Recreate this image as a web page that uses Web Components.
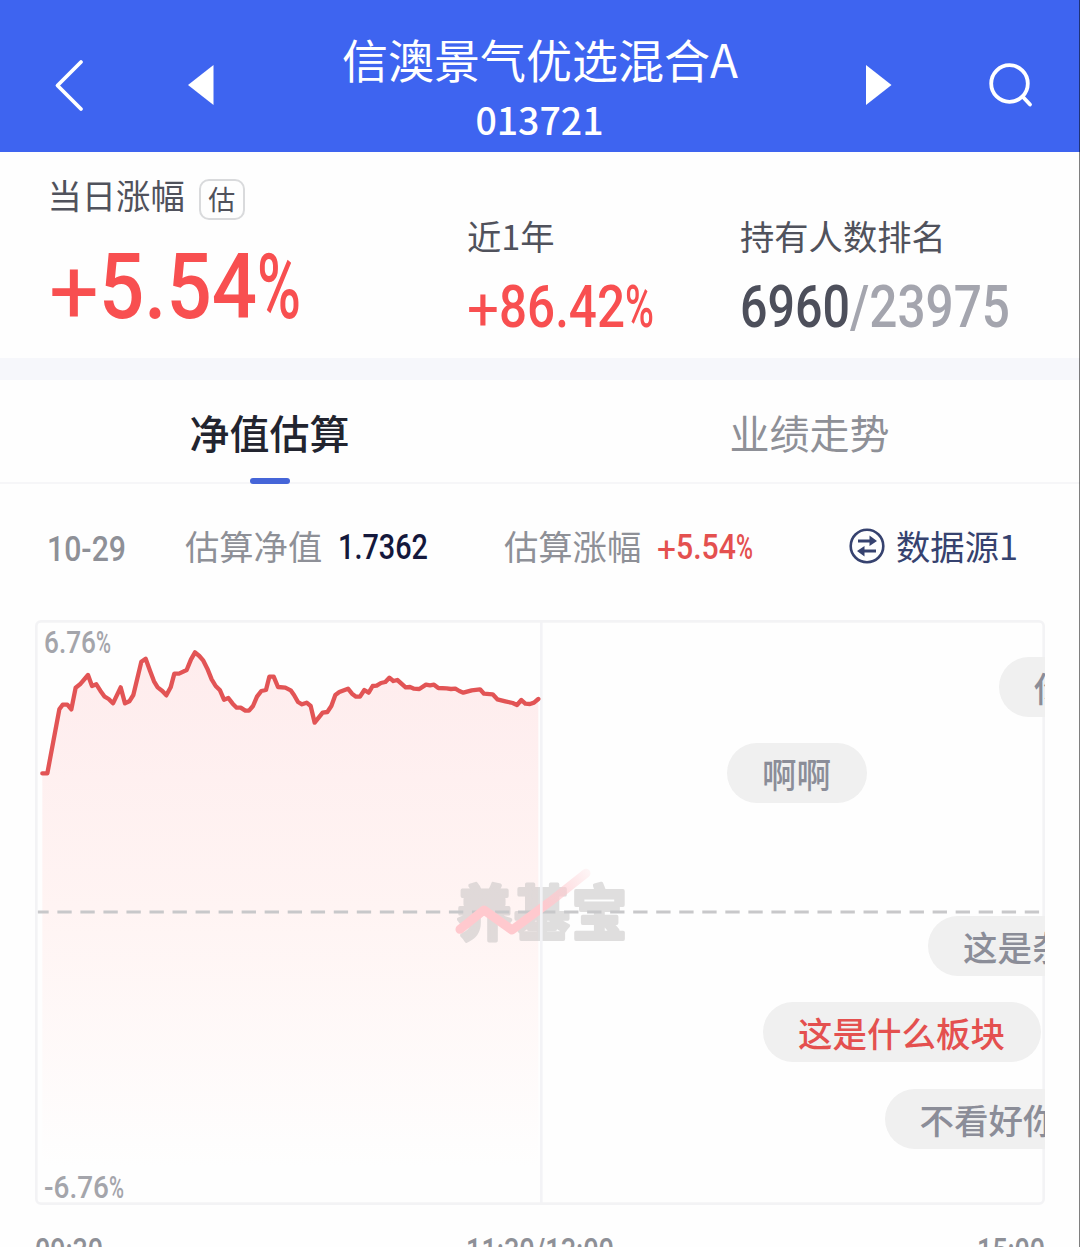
<!DOCTYPE html>
<html lang="zh-CN">
<head>
<meta charset="utf-8">
<title>信澳景气优选混合A</title>
<style>
    body {
        margin: 0;
        width: 1080px;
        height: 1247px;
        overflow: hidden;
        background: #fefefe;
        font-family: "Noto Sans CJK SC", sans-serif;
    }
</style>
</head>
<body>

<fund-page>
    <fund-header slot="header" code="013721">信澳景气优选混合A</fund-header>

    <fund-stats slot="stats">
        <fund-stat class="main" tag="估">当日涨幅
            <din-number slot="value" value="+5.54%" parts="50 158 44" size="91.5"></din-number>
        </fund-stat>
        <fund-stat>近1年
            <din-number slot="value" value="+86.42%" parts="32 126 29" size="59"></din-number>
        </fund-stat>
        <fund-stat>持有人数排名
            <din-number slot="value" value="6960" parts="0 110 0" size="59" style="color:#4d4f5b"></din-number>
            <din-number slot="value" value="/23975" parts="0 160 0" size="59" style="color:#a4a5ae"></din-number>
        </fund-stat>
    </fund-stats>

    <fund-tabs slot="tabs">
        <fund-tab active>净值估算</fund-tab>
        <fund-tab>业绩走势</fund-tab>
    </fund-tabs>

    <estimate-bar slot="estimate"></estimate-bar>

    <trend-chart slot="chart">
        <chat-bubble style="left:964px;top:37px">你</chat-bubble>
        <chat-bubble style="left:692px;top:123px">啊啊</chat-bubble>
        <chat-bubble style="left:893px;top:296px">这是杂</chat-bubble>
        <chat-bubble style="left:728px;top:382px;color:#e4504f">这是什么板块</chat-bubble>
        <chat-bubble style="left:849.5px;top:469px">不看好你</chat-bubble>
    </trend-chart>
</fund-page>

<script>
// ╔══════════════════════════════════════════════════════════╗
// ║                       Shared helper                      ║
// ╚══════════════════════════════════════════════════════════╝
function define(name, html, ready) {
    const template = document.createElement('template');
    template.innerHTML = html;

    customElements.define(name, class extends HTMLElement {
        constructor() {
            super();
            this.attachShadow({ mode: "open" });
            this.shadowRoot.appendChild(template.content.cloneNode(true));
        }
        connectedCallback() {
            if (ready) ready(this, this.shadowRoot);
        }
    });
}

// ╔══════════════════════════════════════════════════════════╗
// ║        Condensed number, box is exactly cap height       ║
// ║        parts: widths of the sign, digits and percent     ║
// ╚══════════════════════════════════════════════════════════╝
define('din-number', /* html */`
    <style>
        :host { display: block; flex: none; }
        svg { display: block; overflow: visible; }
        text { font-family: Roboto, sans-serif; font-weight: 500; fill: currentColor; }
        .sign { font-weight: 400; }
    </style>
    <svg></svg>
`, (el, root) => {
    const size = +el.getAttribute('size');
    const [sign, digits, percent] = el.getAttribute('parts').split(' ').map(Number);
    const value = el.getAttribute('value');
    const height = size * 0.711;
    const svg = root.querySelector('svg');
    const part = (text, width, x, y, cls) => width
        ? `<tspan class="${cls}" x="${x}" y="${y}" textLength="${width}" lengthAdjust="spacingAndGlyphs">${text}</tspan>`
        : '';

    svg.setAttribute('width', sign + digits + percent);
    svg.setAttribute('height', height);
    svg.innerHTML = `<text font-size="${size}">` +
        part('+', sign, 0, height + size * 0.05, 'sign') +
        part(value.replace(/[+%]/g, ''), digits, sign, height, 'digits') +
        part('%', percent, sign + digits, height, 'percent') +
        '</text>';
});

// ╔══════════════════════════════════════════════════════════╗
// ║                           Page                           ║
// ╚══════════════════════════════════════════════════════════╝
define('fund-page', /* html */`
    <style>
        :host {
            display: flex;
            flex-direction: column;
            position: relative;
            height: 1247px;
            overflow: hidden;
        }
        .divider { height: 22px; flex: none; background: #f6f7fb; }
        .edge {
            position: absolute;
            top: 0; right: 0; bottom: 0;
            width: 1px;
            background: rgba(0, 0, 0, 0.5);
        }
    </style>
    <slot name="header"></slot>
    <slot name="stats"></slot>
    <div class="divider"></div>
    <slot name="tabs"></slot>
    <slot name="estimate"></slot>
    <slot name="chart"></slot>
    <div class="edge"></div>
`);

// ╔══════════════════════════════════════════════════════════╗
// ║                          Header                          ║
// ╚══════════════════════════════════════════════════════════╝
define('fund-header', /* html */`
    <style>
        :host {
            display: flex;
            flex: none;
            align-items: center;
            box-sizing: border-box;
            height: 152px;
            padding: 18px 45px 0 54px;
            background: #3e64f0;
            color: #fff;
        }
        svg { display: block; flex: none; }
        .prev { margin-left: 104px; }
        .next { margin-right: 97px; }
        .search { margin-top: 2px; }
        .titles {
            flex: 1;
            display: flex;
            flex-direction: column;
            align-items: center;
            margin-top: 1px;
        }
        .name { font-size: 46px; line-height: 66px; white-space: nowrap; }
        .code { font-size: 37.500px; line-height: 54px; font-weight: 500; margin: 1px 1px 0 0; }
    </style>
    <svg width="30" height="54" fill="none" stroke="#fff" stroke-width="3.800" stroke-linecap="round" stroke-linejoin="round"><path d="M27 4 L3.500 27.500 L27 51"/></svg>
    <svg class="prev" width="26" height="40" fill="#fff"><path d="M0 20 L25.500 0 V40 Z"/></svg>
    <div class="titles">
        <div class="name"><slot></slot></div>
        <div class="code"></div>
    </div>
    <svg class="next" width="26" height="40" fill="#fff"><path d="M25.500 20 L0 0 V40 Z"/></svg>
    <svg class="search" width="46" height="46" fill="none" stroke="#fff" stroke-width="3.800" stroke-linecap="round"><circle cx="20.500" cy="20.500" r="18.300"/><path d="M34 34 L41 41.500"/></svg>
`, (el, root) => {
    root.querySelector('.code').textContent = el.getAttribute('code');
});

// ╔══════════════════════════════════════════════════════════╗
// ║                          Stats                           ║
// ╚══════════════════════════════════════════════════════════╝
define('fund-stats', /* html */`
    <style>
        :host {
            display: grid;
            grid-template-columns: 418px 273px 1fr;
            align-items: end;
            flex: none;
            box-sizing: border-box;
            height: 206px;
            padding: 0 0 31.500px 49px;
        }
        ::slotted(.main) { margin-bottom: 8px; --gap: 33.500px; --label-shift: -1.500px; }
    </style>
    <slot></slot>
`);

define('fund-stat', /* html */`
    <style>
        :host {
            display: flex;
            flex-direction: column;
            gap: var(--gap, 24.500px);
            color: #f84f50;
        }
        .label {
            display: flex;
            gap: 14px;
            color: #50525c;
            font-size: 34.3px;
            line-height: 50px;
            height: 41px;
            align-items: center;
            margin-left: var(--label-shift, 0);
        }
        .text { margin-top: -10px; }
        .tag {
            box-sizing: border-box;
            width: 46px;
            height: 41px;
            border: 2px solid #d9dadc;
            border-radius: 10px;
            font-size: 27px;
            line-height: 36px;
            text-align: center;
        }
        .tag:empty { display: none; }
        .value { display: flex; }
    </style>
    <div class="label"><span class="text"><slot></slot></span><span class="tag"></span></div>
    <div class="value"><slot name="value"></slot></div>
`, (el, root) => {
    root.querySelector('.tag').textContent = el.getAttribute('tag') || '';
});

// ╔══════════════════════════════════════════════════════════╗
// ║                           Tabs                           ║
// ╚══════════════════════════════════════════════════════════╝
define('fund-tabs', /* html */`
    <style>
        :host {
            display: flex;
            flex: none;
            box-sizing: border-box;
            height: 104px;
            border-bottom: 2px solid #f6f6f8;
        }
    </style>
    <slot></slot>
`);

define('fund-tab', /* html */`
    <style>
        :host {
            flex: 1;
            display: flex;
            flex-direction: column;
            align-items: center;
            justify-content: space-between;
            color: #8e9097;
            font-size: 40px;
            line-height: 58px;
            padding-top: 23px;
        }
        :host([active]) { color: #22242f; font-weight: 500; }
        .text { margin-right: 1px; }
        .bar { width: 40px; height: 6px; border-radius: 3px; margin-bottom: -2px; }
        :host([active]) .bar { background: #4565d8; }
    </style>
    <span class="text"><slot></slot></span>
    <div class="bar"></div>
`);

// ╔══════════════════════════════════════════════════════════╗
// ║                 Date, estimate and source                ║
// ╚══════════════════════════════════════════════════════════╝
define('estimate-bar', /* html */`
    <style>
        :host {
            display: flex;
            flex: none;
            align-items: center;
            box-sizing: border-box;
            height: 136px;
            padding: 0 62px 12px 47px;
            color: #8e9097;
            font-size: 34.300px;
            white-space: nowrap;
        }
        .date { width: 138px; padding-top: 5px; }
        .pair { display: flex; align-items: center; gap: 16px; }
        .nav { width: 319px; }
        .label { margin-top: -2px; }
        .nav din-number { color: #14183c; }
        .change din-number { color: #e4504f; }
        .source { display: flex; align-items: center; gap: 11px; margin-left: auto; color: #36426f; }
    </style>
    <div class="date"><din-number value="10-29" parts="0 79 0" size="35"></din-number></div>
    <div class="pair nav"><span class="label">估算净值</span><din-number value="1.7362" parts="0 90 0" size="35"></din-number></div>
    <div class="pair change"><span class="label">估算涨幅</span><din-number value="+5.54%" parts="19 60 17" size="35"></din-number></div>
    <div class="source">
        <svg width="36" height="36" fill="none" stroke="currentColor" stroke-width="2.600">
            <circle cx="18" cy="18" r="16.300"/>
            <path d="M9 13 H25 M27 23 H11" stroke-width="2.800"/>
            <path d="M20.500 7.500 L28 13 L20.500 18 Z M15.500 18 L8 23 L15.500 28.500 Z" fill="currentColor" stroke="none"/>
        </svg>
        <span class="label">数据源1</span>
    </div>
`);

// ╔══════════════════════════════════════════════════════════╗
// ║                       Trend chart                        ║
// ╚══════════════════════════════════════════════════════════╝
// Line points, in thirds of a pixel
const trend = '67,520 82,520 118,328 128,314 142,314 154,328 167,263 180,253 204,225 216,258 229,253 241,272 ' +
    '254,290 266,297 279,310 302,262 315,310 328,304 340,285 364,185 377,176 390,212 402,244 413,262 427,273 ' +
    '439,286 452,262 463,221 477,221 500,210 513,178 525,157 538,168 550,182 562,206 575,238 587,258 600,271 ' +
    '612,299 625,294 638,311 650,323 662,323 676,332 687,332 699,318 711,290 724,273 738,270 748,230 761,230 ' +
    '774,261 796,263 812,271 822,285 834,306 846,313 860,308 872,318 884,368 908,338 922,336 934,318 946,285 ' +
    '958,276 984,266 996,281 1008,290 1020,290 1033,270 1046,278 1058,258 1070,257 1083,249 1096,246 1108,233 ' +
    '1120,243 1132,240 1157,262 1170,261 1182,266 1198,267 1218,254 1230,256 1242,254 1255,264 1280,265 ' +
    '1293,267 1306,266 1318,273 1330,278 1355,271 1380,268 1392,281 1418,283 1432,298 1456,304 1478,309 ' +
    '1491,315 1504,300 1516,311 1530,312 1542,308 1555,297';

define('trend-chart', /* html */`
    <style>
        :host { display: block; flex: none; padding: 0 35px; }
        .plot { position: relative; height: 585px; }
        .bubbles {
            position: absolute;
            inset: 0;
            overflow: hidden;
            border-radius: 6px;
        }
        svg { display: block; }
        .scale {
            position: absolute;
            left: 9px;
            color: #a4a5ab;
        }
        .max { top: 10px; }
        .min { bottom: 7px; }
        .times {
            display: flex;
            justify-content: space-between;
            padding-top: 34px;
            color: #8e9097;
        }
        .watermark {
            font: 700 55px "Noto Sans CJK SC", sans-serif;
        }
    </style>
    <div class="plot">
        <svg width="1010" height="585" viewBox="45 60 3030 1755" fill="none">
            <defs>
                <linearGradient id="area" gradientUnits="userSpaceOnUse" x1="0" y1="150" x2="0" y2="1700">
                    <stop offset="0" stop-color="#feeced"/>
                    <stop offset="0.500" stop-color="#fff4f3"/>
                    <stop offset="1" stop-color="#fefefe"/>
                </linearGradient>
                <linearGradient id="fade" gradientUnits="userSpaceOnUse" x1="1560" y1="920" x2="1710" y2="810">
                    <stop offset="0" stop-color="#ffc9ce"/>
                    <stop offset="1" stop-color="#ffc9ce" stop-opacity="0.150"/>
                </linearGradient>
            </defs>
            <polygon points="${trend} 1555,1800 67,1800" fill="url(#area)"/>
            <g class="watermark" fill="#c4c2c2" stroke="#c4c2c2" stroke-width="3.600" stroke-linejoin="round" opacity="0.520">
                <text transform="translate(1311 1006) scale(3 3.200)" textLength="170" lengthAdjust="spacing">养基宝</text>
            </g>
            <path d="M53 936 H3060" stroke="#c8c8ca" stroke-width="9" stroke-dasharray="43 26.100" stroke-dashoffset="10"/>
            <path d="M1320 988 L1392 930 L1476 990 L1590 905 L1698 820" stroke="url(#fade)" stroke-width="27" stroke-linecap="round" stroke-linejoin="round"/>
            <path d="M1564 62 V1812" stroke="#f3f3f6" stroke-width="8"/>
            <polyline points="${trend}" stroke="#e25455" stroke-width="13" stroke-linecap="round" stroke-linejoin="round"/>
            <rect x="49" y="64" width="3022" height="1747" rx="14" stroke="#f3f3f5" stroke-width="8"/>
        </svg>
        <din-number class="scale max" value="6.76%" parts="0 52 15" size="32"></din-number>
        <din-number class="scale min" value="-6.76%" parts="0 65 15" size="32"></din-number>
        <div class="bubbles"><slot></slot></div>
    </div>
    <div class="times">
        <din-number value="09:30" parts="0 68 0" size="33"></din-number>
        <din-number value="11:30/13:00" parts="0 148 0" size="33"></din-number>
        <din-number value="15:00" parts="0 68 0" size="33"></din-number>
    </div>
`);

define('chat-bubble', /* html */`
    <style>
        :host {
            position: absolute;
            display: block;
            box-sizing: border-box;
            height: 60px;
            padding: 0 36px 0 35px;
            border-radius: 30px;
            background: #f0f0f0;
            color: #8b8d98;
            font-size: 34.500px;
            font-weight: 500;
            line-height: 60px;
            white-space: nowrap;
        }
    </style>
    <slot></slot>
`);
</script>
</body>
</html>
